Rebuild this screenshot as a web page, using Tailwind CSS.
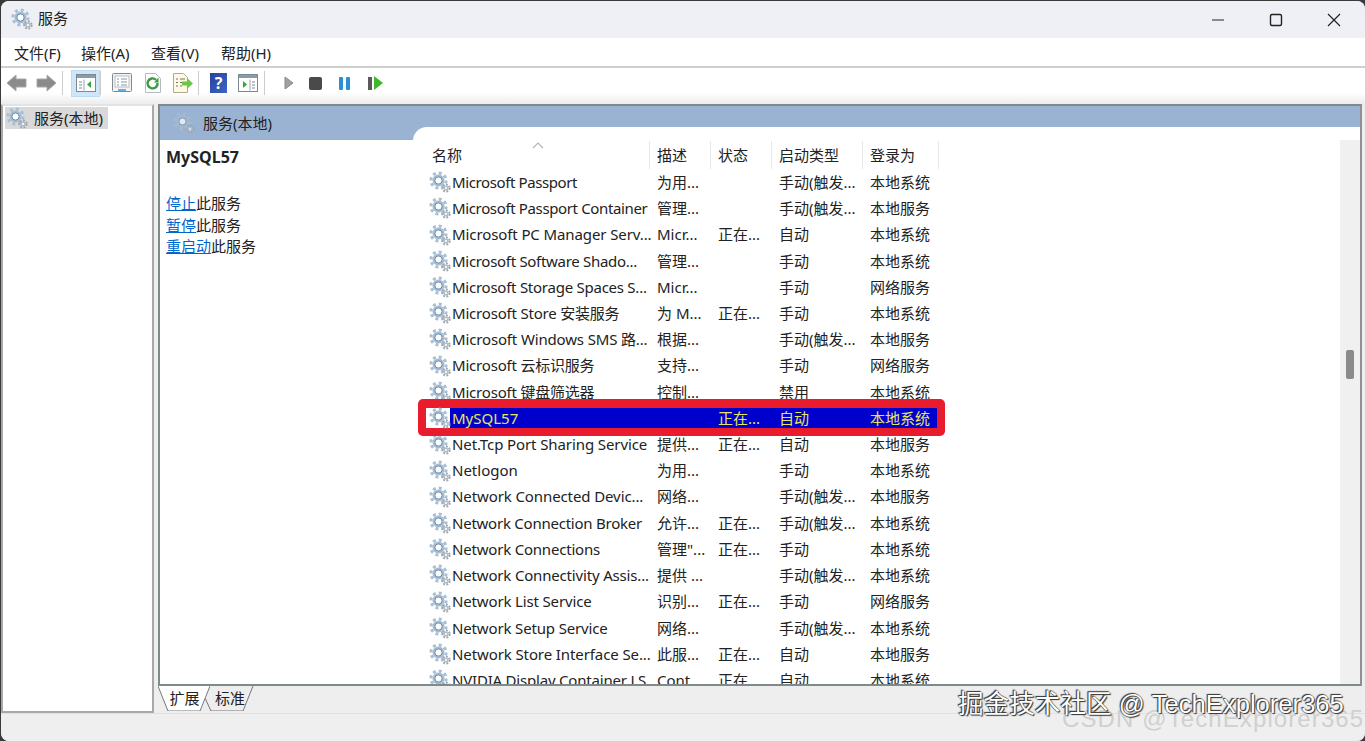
<!DOCTYPE html>
<html lang="zh">
<head>
<meta charset="utf-8">
<script src="https://cdn.jsdelivr.net/npm/@tailwindcss/browser@4"></script>
<title>服务</title>
</head>
<body class="w-[1365px] h-[741px] overflow-hidden bg-[#3a3a3a] font-['Noto_Sans','Noto_Sans_CJK_SC',sans-serif] text-[15px] text-[#222]">
<svg width="0" height="0" class="absolute">
  <defs>
    <symbol id="gear" viewBox="0 0 22 22">
      <circle cx="9.5" cy="9.5" r="7.6" fill="none" stroke="#a9bfd3" stroke-width="3" stroke-dasharray="3 2.97"/>
      <circle cx="9.5" cy="9.5" r="6" fill="#a6bdd3"/>
      <circle cx="9.5" cy="9.5" r="3.6" fill="#fff" stroke="#6d8cab" stroke-width="1"/>
      <circle cx="17" cy="17" r="3.6" fill="none" stroke="#98a4ae" stroke-width="2" stroke-dasharray="1.8 1.5"/>
      <circle cx="17" cy="17" r="2.6" fill="#b4bdc5"/>
      <circle cx="17" cy="17" r="1.1" fill="#fff"/>
    </symbol>
  </defs>
</svg>

<div class="relative flex flex-col w-[1364px] h-[740px] ml-px mt-px rounded-t-lg rounded-b-lg overflow-hidden bg-[#eeeeee]">
  <!-- title bar -->
  <div class="flex items-center h-[37px] shrink-0 bg-[#eef0f6] pl-[10px]">
    <svg class="w-[22px] h-[22px] -mt-[2px]"><use href="#gear"/></svg>
    <span class="ml-[5px] -mt-[2px]">服务</span>
    <div class="ml-auto flex items-center pr-[21px] gap-[38px]">
      <svg width="20" height="20" viewBox="0 0 20 20"><path d="M4 10h12" stroke="#222" stroke-width="1.2"/></svg>
      <svg width="20" height="20" viewBox="0 0 20 20"><rect x="4.5" y="4.5" width="11" height="11" rx="1.5" fill="none" stroke="#222" stroke-width="1.4"/></svg>
      <svg width="20" height="20" viewBox="0 0 20 20"><path d="M4 4l12 12M16 4L4 16" stroke="#222" stroke-width="1.2"/></svg>
    </div>
  </div>
  <!-- menu -->
  <div class="flex items-center h-[30px] shrink-0 bg-white border-b-2 border-[#cfcfcf] pl-[13px] pt-[2px]">
    <span class="w-[67px]">文件(F)</span>
    <span class="w-[70px]">操作(A)</span>
    <span class="w-[70px]">查看(V)</span>
    <span>帮助(H)</span>
  </div>
  <!-- toolbar -->
  <div class="flex items-center h-[36px] shrink-0 pb-[6px] bg-gradient-to-b from-white from-70% to-[#ececec] pl-[5px]">
    <svg width="22" height="20" viewBox="0 0 22 20"><path d="M1 10l9-8v4h10v8H10v4z" fill="#8b8b8b" stroke="#a8a8a8"/></svg>
    <svg class="ml-[7px]" width="22" height="20" viewBox="0 0 22 20"><path d="M21 10l-9-8v4H2v8h10v4z" fill="#8b8b8b" stroke="#a8a8a8"/></svg>
    <div class="ml-[5px] w-px h-[24px] bg-[#cccccc]"></div>
    <div class="ml-[8px] w-[29px] h-[27px] flex items-center justify-center bg-[#cfe6f8] border border-[#bcdcf4]">
      <svg width="20" height="18" viewBox="0 0 20 18"><rect x=".5" y=".5" width="19" height="17" fill="#fff" stroke="#7d8a94"/><rect x="1" y="1" width="18" height="3" fill="#8d9ba6"/><path d="M8 5.5v11" stroke="#9aa7b0"/><path d="M3 8h3M3 11h3M3 14h3" stroke="#7d8a94"/><path d="M15 7v7l-4-3.500z" fill="#2fa63a"/></svg>
    </div>
    <div class="w-px h-[24px] bg-[#cccccc]"></div>
    <svg class="ml-[11px]" width="20" height="20" viewBox="0 0 20 20"><rect x=".5" y=".5" width="19" height="18" rx="1" fill="#f3f3f3" stroke="#808a92"/><rect x="3" y="3" width="14" height="11" fill="#fff" stroke="#b7bec4"/><path d="M5 6h2M9 6h6M5 9h2M9 9h6M5 12h2M9 12h6" stroke="#8a949c"/><rect x="6" y="16" width="8" height="2" fill="#5cb6e4"/></svg>
    <svg class="ml-[12px]" width="18" height="20" viewBox="0 0 18 20"><path d="M1.500.5h10l5 5v14h-15z" fill="#fff" stroke="#b3bcc3"/><path d="M13.500 9.800a5 5 0 1 1-1.500-3" fill="none" stroke="#3a9a3e" stroke-width="2.400"/><path d="M14.500 4.500v5h-4.500z" fill="#3a9a3e"/></svg>
    <svg class="ml-[10px]" width="21" height="20" viewBox="0 0 21 20"><path d="M1.500.5h10l4 4v15h-14z" fill="#fff8e2" stroke="#b3aa8c"/><path d="M4 6h2M8 6h5M4 9.500h2M8 9.500h3M4 13h2M8 13h2" stroke="#77746a"/><path d="M10 8.500h5V5l6 5.500-6 5.500v-3.500h-5z" fill="#6cc644"/></svg>
    <div class="ml-[5px] w-px h-[24px] bg-[#cccccc]"></div>
    <div class="ml-[11px] w-[17px] h-[20px] flex items-center justify-center bg-gradient-to-br from-[#2a3f9e] to-[#3c66c4] text-white font-bold text-[16px] leading-none">?</div>
    <svg class="ml-[11px]" width="20" height="18" viewBox="0 0 20 18"><rect x=".5" y=".5" width="19" height="17" fill="#fff" stroke="#7d8a94"/><rect x="1" y="1" width="18" height="3" fill="#8d9ba6"/><path d="M12 5.500v11" stroke="#9aa7b0"/><path d="M14 8h3M14 11h3M14 14h3" stroke="#7d8a94"/><path d="M5 7v7l4-3.500z" fill="#2fa63a"/></svg>
    <div class="ml-[6px] w-px h-[24px] bg-[#cccccc]"></div>
    <svg class="ml-[19px]" width="10" height="14" viewBox="0 0 10 14"><path d="M1 1l8 6-8 6z" fill="#a0a0a0" stroke="#8a8a8a"/></svg>
    <div class="ml-[15px] w-[13px] h-[13px] rounded-[2px] bg-[#4a4a4a]"></div>
    <div class="ml-[17px] flex gap-[3px]"><div class="w-[4px] h-[13px] rounded-[1px] bg-[#2b8fd8]"></div><div class="w-[4px] h-[13px] rounded-[1px] bg-[#2b8fd8]"></div></div>
    <div class="ml-[18px] w-[4px] h-[13px] bg-[#5a5a5a]"></div>
    <svg class="ml-[2px]" width="9" height="14" viewBox="0 0 9 14"><path d="M0 0l9 7-9 7z" fill="#3fb82c"/></svg>
  </div>

  <!-- content -->
  <div class="flex flex-1 min-h-0 pr-[3px]">
    <!-- tree -->
    <div class="w-[153px] shrink-0 bg-white border-2 border-[#a8a8a8] border-t-[#e3e3e3] pl-[2px] py-px">
      <div class="flex items-center w-[103px] h-[22px] bg-[#d9d9d9] pl-[1px]">
        <svg class="w-[22px] h-[22px] shrink-0"><use href="#gear"/></svg>
        <span class="ml-[6px] whitespace-nowrap">服务(本地)</span>
      </div>
    </div>
    <!-- right -->
    <div class="ml-[4px] flex-1 min-w-0 flex flex-col">
      <div class="h-[582px] shrink-0 border-2 border-[#7f8a8a] border-r-[#909090] bg-[#9ab3d2] flex flex-col overflow-hidden">
        <div class="flex items-center h-[34px] shrink-0 pl-[13px] -mb-[13px]">
          <svg class="w-[22px] h-[22px] opacity-70"><use href="#gear"/></svg>
          <span class="ml-[8px]">服务(本地)</span>
        </div>
        <div class="flex flex-1 min-h-0">
          <!-- action pane -->
          <div class="w-[253px] shrink-0 flex flex-col">
            <div class="h-[13px] shrink-0"></div>
            <div class="flex-1 bg-white pl-[6px] pt-[6px]">
              <div class="font-bold text-[16px] leading-[22px]">MySQL57</div>
              <div class="mt-[25px] leading-[21.500px]">
                <div><a class="text-[#0066cc] underline">停止</a>此服务</div>
                <div><a class="text-[#0066cc] underline">暂停</a>此服务</div>
                <div><a class="text-[#0066cc] underline">重启动</a>此服务</div>
              </div>
            </div>
          </div>
          <!-- list pane -->
          <div class="relative flex-1 min-w-0 bg-white rounded-tl-[14px] overflow-hidden flex">
            <div class="flex-1 min-w-0 flex flex-col overflow-hidden">
              <div class="h-[14px] shrink-0"></div>
              <div class="relative flex h-[28px] shrink-0 items-center">
                <svg class="absolute left-[119px] top-[1px]" width="12" height="7" viewBox="0 0 12 7"><path d="M1 6l5-5 5 5" fill="none" stroke="#b5b5b5" stroke-width="1.200"/></svg>
                <div class="w-[237px] h-full pl-[19px] flex items-center border-r border-[#e8e8e8]">名称</div>
                <div class="w-[61px] h-full pl-[7px] flex items-center border-r border-[#e8e8e8]">描述</div>
                <div class="w-[61px] h-full pl-[7px] flex items-center border-r border-[#e8e8e8]">状态</div>
                <div class="w-[91px] h-full pl-[7px] flex items-center border-r border-[#e8e8e8]">启动类型</div>
                <div class="w-[76px] h-full pl-[7px] flex items-center border-r border-[#e8e8e8]">登录为</div>
              </div>
              <div class="pl-[16px] whitespace-nowrap">
                <div class="grid grid-cols-[228px_61px_61px_91px_76px] items-center h-[26.220px]"><div class="flex items-center tracking-[-0.39px]"><svg class="w-[22px] h-[22px] shrink-0 mr-px"><use href="#gear"/></svg>Microsoft Passport</div><div>为用...</div><div></div><div>手动(触发...</div><div>本地系统</div></div>
                <div class="grid grid-cols-[228px_61px_61px_91px_76px] items-center h-[26.220px]"><div class="flex items-center tracking-[-0.36px]"><svg class="w-[22px] h-[22px] shrink-0 mr-px"><use href="#gear"/></svg>Microsoft Passport Container</div><div>管理...</div><div></div><div>手动(触发...</div><div>本地服务</div></div>
                <div class="grid grid-cols-[228px_61px_61px_91px_76px] items-center h-[26.220px]"><div class="flex items-center tracking-[-0.1px]"><svg class="w-[22px] h-[22px] shrink-0 mr-px"><use href="#gear"/></svg>Microsoft PC Manager Serv...</div><div>Micr...</div><div>正在...</div><div>自动</div><div>本地系统</div></div>
                <div class="grid grid-cols-[228px_61px_61px_91px_76px] items-center h-[26.220px]"><div class="flex items-center tracking-[-0.3px]"><svg class="w-[22px] h-[22px] shrink-0 mr-px"><use href="#gear"/></svg>Microsoft Software Shado...</div><div>管理...</div><div></div><div>手动</div><div>本地系统</div></div>
                <div class="grid grid-cols-[228px_61px_61px_91px_76px] items-center h-[26.220px]"><div class="flex items-center tracking-[-0.25px]"><svg class="w-[22px] h-[22px] shrink-0 mr-px"><use href="#gear"/></svg>Microsoft Storage Spaces S...</div><div>Micr...</div><div></div><div>手动</div><div>网络服务</div></div>
                <div class="grid grid-cols-[228px_61px_61px_91px_76px] items-center h-[26.220px]"><div class="flex items-center tracking-[-0.2px]"><svg class="w-[22px] h-[22px] shrink-0 mr-px"><use href="#gear"/></svg>Microsoft Store 安装服务</div><div>为 M...</div><div>正在...</div><div>手动</div><div>本地系统</div></div>
                <div class="grid grid-cols-[228px_61px_61px_91px_76px] items-center h-[26.220px]"><div class="flex items-center tracking-[-0.15px]"><svg class="w-[22px] h-[22px] shrink-0 mr-px"><use href="#gear"/></svg>Microsoft Windows SMS 路...</div><div>根据...</div><div></div><div>手动(触发...</div><div>本地服务</div></div>
                <div class="grid grid-cols-[228px_61px_61px_91px_76px] items-center h-[26.220px]"><div class="flex items-center tracking-[-0.2px]"><svg class="w-[22px] h-[22px] shrink-0 mr-px"><use href="#gear"/></svg>Microsoft 云标识服务</div><div>支持...</div><div></div><div>手动</div><div>网络服务</div></div>
                <div class="grid grid-cols-[228px_61px_61px_91px_76px] items-center h-[26.220px]"><div class="flex items-center tracking-[-0.2px]"><svg class="w-[22px] h-[22px] shrink-0 mr-px"><use href="#gear"/></svg>Microsoft 键盘筛选器</div><div>控制...</div><div></div><div>禁用</div><div>本地系统</div></div>
                <!-- selected -->
                <div class="relative z-10 grid grid-cols-[228px_61px_61px_91px_76px] items-center h-[26.220px] text-[#e6e65a]">
                  <div class="absolute -left-[11px] top-[-6px] w-[527px] h-[37px] rounded-[5px] bg-[#e81c2c]"></div>
                  <div class="absolute -left-[3px] top-[3px] w-[24px] h-[20px] bg-white"></div>
                  <div class="absolute left-[21px] top-[3px] w-[487px] h-[20px] bg-[#0000cd]"></div>
                  <div class="relative flex items-center"><svg class="w-[22px] h-[22px] shrink-0 mr-px"><use href="#gear"/></svg>MySQL57</div><div class="relative"></div><div class="relative">正在...</div><div class="relative">自动</div><div class="relative">本地系统</div>
                </div>
                <div class="grid grid-cols-[228px_61px_61px_91px_76px] items-center h-[26.220px]"><div class="flex items-center tracking-[-0.1px]"><svg class="w-[22px] h-[22px] shrink-0 mr-px"><use href="#gear"/></svg>Net.Tcp Port Sharing Service</div><div>提供...</div><div>正在...</div><div>自动</div><div>本地服务</div></div>
                <div class="grid grid-cols-[228px_61px_61px_91px_76px] items-center h-[26.220px]"><div class="flex items-center"><svg class="w-[22px] h-[22px] shrink-0 mr-px"><use href="#gear"/></svg>Netlogon</div><div>为用...</div><div></div><div>手动</div><div>本地系统</div></div>
                <div class="grid grid-cols-[228px_61px_61px_91px_76px] items-center h-[26.220px]"><div class="flex items-center tracking-[-0.1px]"><svg class="w-[22px] h-[22px] shrink-0 mr-px"><use href="#gear"/></svg>Network Connected Devic...</div><div>网络...</div><div></div><div>手动(触发...</div><div>本地服务</div></div>
                <div class="grid grid-cols-[228px_61px_61px_91px_76px] items-center h-[26.220px]"><div class="flex items-center tracking-[-0.24px]"><svg class="w-[22px] h-[22px] shrink-0 mr-px"><use href="#gear"/></svg>Network Connection Broker</div><div>允许...</div><div>正在...</div><div>手动(触发...</div><div>本地系统</div></div>
                <div class="grid grid-cols-[228px_61px_61px_91px_76px] items-center h-[26.220px]"><div class="flex items-center tracking-[-0.2px]"><svg class="w-[22px] h-[22px] shrink-0 mr-px"><use href="#gear"/></svg>Network Connections</div><div>管理"...</div><div>正在...</div><div>手动</div><div>本地系统</div></div>
                <div class="grid grid-cols-[228px_61px_61px_91px_76px] items-center h-[26.220px]"><div class="flex items-center tracking-[-0.17px]"><svg class="w-[22px] h-[22px] shrink-0 mr-px"><use href="#gear"/></svg>Network Connectivity Assis...</div><div>提供 ...</div><div></div><div>手动(触发...</div><div>本地系统</div></div>
                <div class="grid grid-cols-[228px_61px_61px_91px_76px] items-center h-[26.220px]"><div class="flex items-center tracking-[-0.15px]"><svg class="w-[22px] h-[22px] shrink-0 mr-px"><use href="#gear"/></svg>Network List Service</div><div>识别...</div><div>正在...</div><div>手动</div><div>网络服务</div></div>
                <div class="grid grid-cols-[228px_61px_61px_91px_76px] items-center h-[26.220px]"><div class="flex items-center tracking-[-0.15px]"><svg class="w-[22px] h-[22px] shrink-0 mr-px"><use href="#gear"/></svg>Network Setup Service</div><div>网络...</div><div></div><div>手动(触发...</div><div>本地系统</div></div>
                <div class="grid grid-cols-[228px_61px_61px_91px_76px] items-center h-[26.220px]"><div class="flex items-center tracking-[-0.1px]"><svg class="w-[22px] h-[22px] shrink-0 mr-px"><use href="#gear"/></svg>Network Store Interface Se...</div><div>此服...</div><div>正在...</div><div>自动</div><div>本地服务</div></div>
                <div class="grid grid-cols-[228px_61px_61px_91px_76px] items-center h-[26.220px]"><div class="flex items-center tracking-[-0.2px]"><svg class="w-[22px] h-[22px] shrink-0 mr-px"><use href="#gear"/></svg>NVIDIA Display Container LS</div><div>Cont...</div><div>正在...</div><div>自动</div><div>本地系统</div></div>
              </div>
            </div>
            <!-- scrollbar -->
            <div class="w-[20px] shrink-0 mt-[13px] bg-[#f0f0f0] relative">
              <div class="absolute left-[6px] top-[210px] w-[8px] h-[29px] rounded-[2px] bg-[#8a8a8a]"></div>
            </div>
          </div>
        </div>
      </div>
      <!-- tabs -->
      <div class="flex h-[26px] shrink-0">
        <div class="relative w-[52px] h-[25px] flex items-center justify-center pl-px">
          <svg class="absolute inset-0" width="52" height="25" viewBox="0 0 52 25"><path d="M0 0l10 25h32L52 0" fill="#fff" stroke="#777"/></svg>
          <span class="relative">扩展</span>
        </div>
        <div class="relative -ml-[5px] w-[50px] h-[25px] flex items-center justify-center">
          <svg class="absolute inset-0" width="50" height="25" viewBox="0 0 50 25"><path d="M0 12l6 13h32L48 0" fill="#eeeeee" stroke="#777"/></svg>
          <span class="relative">标准</span>
        </div>
      </div>
    </div>
  </div>
  <!-- status bar -->
  <div class="h-[28px] shrink-0 border-t border-[#e0e0e0] bg-[#efefef]"></div>
  <!-- watermarks -->
  <div class="absolute left-[1061px] top-[703px] text-[24px] leading-[30px] tracking-[1.1px] text-[#d0d0d0] whitespace-nowrap font-['Liberation_Sans',sans-serif]">CSDN @TechExplorer365</div>
  <div class="absolute left-[957px] top-[685px] text-[25.600px] leading-[36px] text-white whitespace-nowrap font-['Liberation_Sans','Noto_Sans_CJK_SC',sans-serif] [text-shadow:0_0_1px_#222,1px_1px_1px_#333,-1px_-1px_1px_#333]">掘金技术社区 @ TechExplorer365</div>
</div>
</body>
</html>
